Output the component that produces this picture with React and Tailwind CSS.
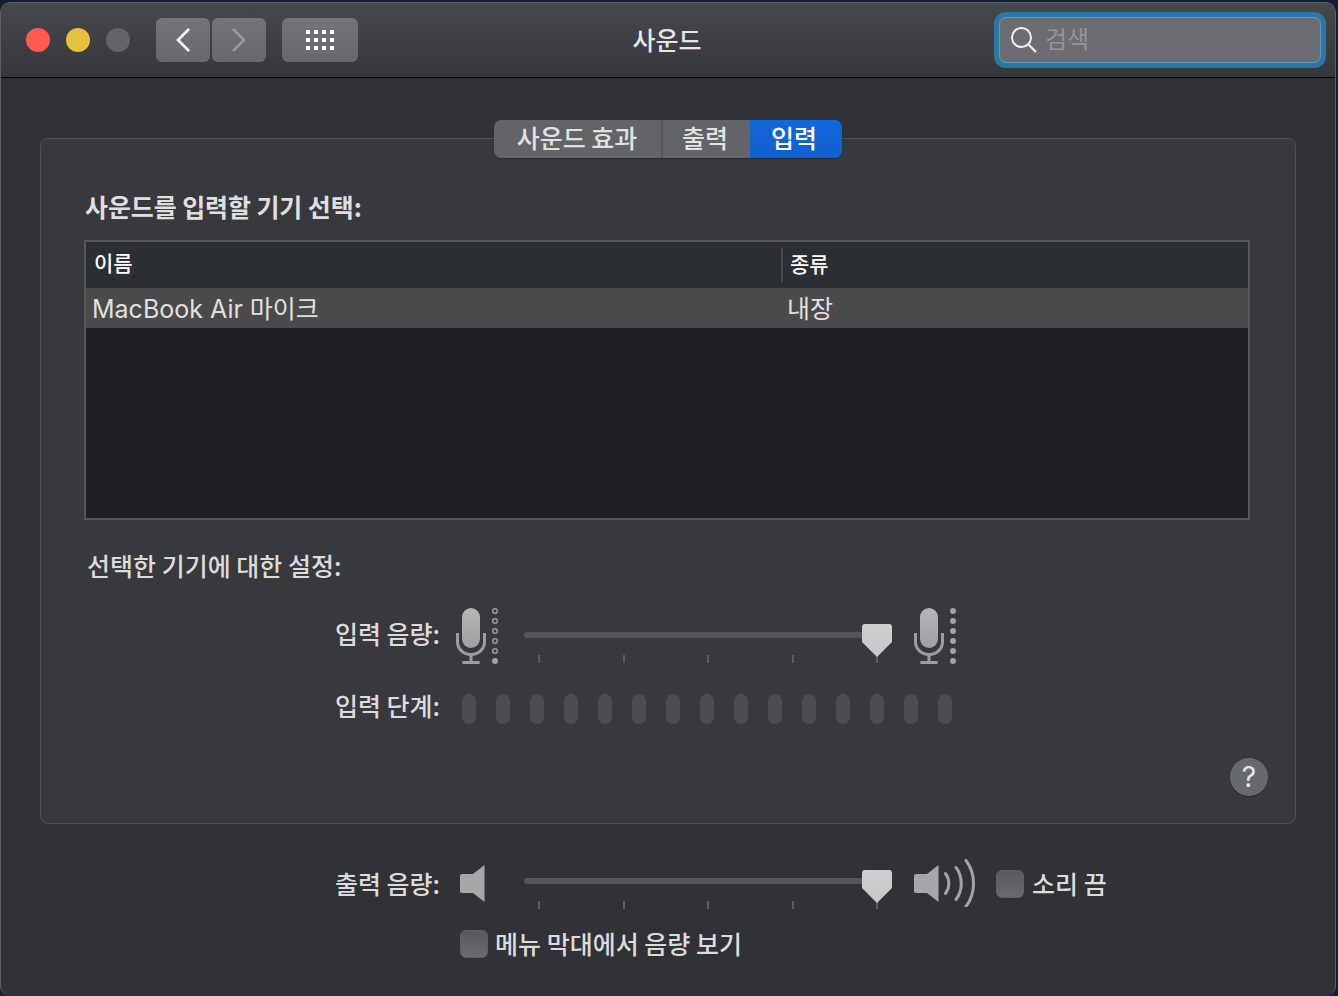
import React from 'react';

const FONT = 'font-["Inter","Noto_Sans_CJK_KR",sans-serif]';
const KR = 'font-["Noto_Sans_CJK_KR","Inter",sans-serif]';

const Mic = ({ filledAll }) => (
  <svg width="44" height="56" viewBox="0 0 44 56" className="shrink-0">
    <defs>
      <linearGradient id="micFill" x1="0" y1="0" x2="0" y2="1">
        <stop offset="0" stopColor="#b4b5b6" />
        <stop offset="1" stopColor="#a0a1a3" />
      </linearGradient>
    </defs>
    <rect x="6" y="0" width="18" height="40" rx="9" fill="url(#micFill)" />
    <path d="M1.500 25v9a13.500 12.500 0 0 0 27 0v-9" fill="none" stroke="#9c9d9f" strokeWidth="3" />
    <path d="M15 46v8" stroke="#9c9d9f" strokeWidth="3" />
    <rect x="6" y="53" width="18" height="3" rx="1.500" fill="#9c9d9f" />
    {[3, 13, 23, 33, 43, 53].map((cy, i) =>
      filledAll || i === 5 ? (
        <circle key={cy} cx="39" cy={cy} r="3" fill="#a2a3a5" />
      ) : (
        <circle key={cy} cx="39" cy={cy} r="2.300" fill="none" stroke="#96979a" strokeWidth="1.600" />
      )
    )}
  </svg>
);

const SpeakerLow = () => (
  <svg width="25" height="37" viewBox="0 0 25 37" className="shrink-0">
    <path d="M2 9h11L24.500 0v37L13 28H2a2 2 0 0 1-2-2V11a2 2 0 0 1 2-2z" fill="#a6a7a9" />
  </svg>
);

const SpeakerHigh = () => (
  <svg width="64" height="48" viewBox="0 0 64 48" className="shrink-0">
    <path d="M2 15h11L24.500 6v37L13 34H2a2 2 0 0 1-2-2V17a2 2 0 0 1 2-2z" fill="#a6a7a9" />
    <g fill="none" stroke="#a2a3a5" strokeWidth="3" strokeLinecap="round">
      <path d="M31.500 14.500c4.500 6 4.500 14 0 20" />
      <path d="M42 8.500c7 9 7 23 0 32" />
      <path d="M52 1.500c10 13 10 33 0 46" />
    </g>
  </svg>
);

const Slider = () => (
  <div className="relative w-[368px] h-[56px] shrink-0">
    <div className="absolute left-0 right-[20px] top-[24px] h-[6px] rounded-full bg-[#55565a]" />
    {[14, 99, 183, 268, 352].map((x) => (
      <div key={x} className="absolute top-[47px] w-[2px] h-[8px] bg-[#5c5d60]" style={{ left: x }} />
    ))}
    <svg width="30" height="33" viewBox="0 0 30 33" className="absolute right-0 top-[16px]">
      <defs>
        <linearGradient id="thumbFill" x1="0" y1="0" x2="0" y2="1">
          <stop offset="0" stopColor="#cfcfcf" />
          <stop offset="1" stopColor="#c6c7c7" />
        </linearGradient>
      </defs>
      <path d="M3 0h24a3 3 0 0 1 3 3v15L15 33 0 18V3a3 3 0 0 1 3-3z" fill="url(#thumbFill)" />
    </svg>
  </div>
);

const Checkbox = () => (
  <div className="w-[28px] h-[28px] shrink-0 rounded-[6px] bg-gradient-to-b from-[#58595c] to-[#6a6b6e] border border-[#5f6063]" />
);

const NavButton = ({ className = '', children }) => (
  <div className={`h-[44px] rounded-[6px] bg-gradient-to-b from-[#737477] to-[#67686b] flex items-center justify-center shrink-0 ${className}`}>
    {children}
  </div>
);

const RowLabel = ({ className = '', children }) => (
  <div className={`w-[399px] shrink-0 text-right text-[25px] leading-[32px] font-medium text-[#dcdcdd] ${className}`}>{children}</div>
);

export default function App() {
  return (
    <div className={`h-[996px] w-[1338px] overflow-hidden bg-[#0e2038] pt-[2px] ${KR}`}>
      <div className="h-[994px] w-[1336px] rounded-[10px] bg-[#313236] border-l border-r border-t border-[#5e5f62] flex flex-col overflow-hidden">
        <div className="h-[75px] shrink-0 border-b border-black bg-gradient-to-b from-[#47484c] to-[#36373b] flex items-center pl-[25px] pr-[9px]">
          <div className="w-[581px] shrink-0 flex items-center">
            <div className="w-[24px] h-[24px] rounded-full bg-[#ff5a52]" />
            <div className="w-[24px] h-[24px] rounded-full bg-[#e6c13c] ml-[16px]" />
            <div className="w-[24px] h-[24px] rounded-full bg-[#636467] ml-[16px]" />
            <NavButton className="w-[54px] ml-[26px]">
              <svg width="16" height="26" viewBox="0 0 16 26">
                <path d="M14 2 3 13l11 11" fill="none" stroke="#fff" strokeWidth="2.600" />
              </svg>
            </NavButton>
            <NavButton className="w-[54px] ml-[2px]">
              <svg width="16" height="26" viewBox="0 0 16 26">
                <path d="M2 2l11 11L2 24" fill="none" stroke="#98999b" strokeWidth="2.600" />
              </svg>
            </NavButton>
            <NavButton className="w-[76px] ml-[16px]">
              <svg width="30" height="22" viewBox="0 0 30 22" fill="#fff">
                {[0, 8, 16].map((y) =>
                  [0, 8, 16, 24].map((x) => <rect key={`${x}-${y}`} x={x + 1} y={y + 1} width="4" height="4" />)
                )}
              </svg>
            </NavButton>
          </div>
          <div className="w-[120px] pb-[2px] text-center text-[25px] leading-[30px] font-medium text-[#e6e6e7]">사운드</div>
          <div className="ml-auto w-[332px] h-[56px] rounded-[12px] bg-[#2b78a8] p-[5px]">
            <div className="h-full rounded-[7px] border border-[#5b9cc4] bg-[#6c6d70] flex items-center pl-[11px]">
              <svg width="26" height="26" viewBox="0 0 26 26" className="shrink-0">
                <circle cx="10.500" cy="10.500" r="9.500" fill="none" stroke="#f0f0f0" strokeWidth="2" />
                <path d="M17.500 17.500 25 25" stroke="#f0f0f0" strokeWidth="2.200" />
              </svg>
              <span className="ml-[8px] mb-[4px] text-[24px] leading-[30px] text-[#949597]">검색</span>
            </div>
          </div>
        </div>

        <div className="ml-[39px] mt-[60px] w-[1256px] h-[686px] shrink-0 rounded-[8px] border border-[#505154] bg-[#38393d] flex flex-col">
          <div className="flex justify-center -mt-[19px] ml-[-1px]">
            <div className="flex h-[38px] w-[348px] rounded-[7px] overflow-hidden text-[25px] leading-[34px] font-medium shadow-[0_1px_1px_rgba(0,0,0,0.25)]">
              <div className="w-[167px] text-center bg-[#636467] text-[#e2e2e3]">사운드 효과</div>
              <div className="w-[89px] pr-[2px] text-center bg-[#636467] text-[#e2e2e3] border-l-2 border-[#535458]">출력</div>
              <div className="w-[92px] pr-[3px] text-center bg-gradient-to-b from-[#1366dc] to-[#115fcf] text-white">입력</div>
            </div>
          </div>
          <div className="ml-[44px] mt-[32px] text-[25px] tracking-[-0.1px] leading-[32px] font-semibold text-[#dfdfe0]">사운드를 입력할 기기 선택:</div>
          <div className="ml-[43px] mt-[18px] w-[1166px] h-[280px] border-2 border-[#56575a] bg-[#1f2024] flex flex-col">
            <div className="h-[46px] bg-[#2b2e33] flex items-center shrink-0">
              <div className="w-[695px] pl-[8px] pb-[7px] text-[21px] leading-[28px] font-medium text-white">이름</div>
              <div className="h-[34px] border-l-2 border-[#47494d] pl-[7px] text-[21px] leading-[30px] font-medium text-white">종류</div>
            </div>
            <div className={`h-[40px] bg-[#4a4a4a] flex items-center shrink-0 text-[25px] leading-[36px] text-[#e0e0e0] ${FONT}`}>
              <div className="w-[701px] pl-[6px] pt-[1px]">MacBook Air 마이크</div>
              <div className="pt-[1px]">내장</div>
            </div>
          </div>
          <div className="ml-[46px] mt-[29px] text-[25px] leading-[32px] font-medium text-[#dcdcdd]">선택한 기기에 대한 설정:</div>
          <div className="mt-[27px] h-[56px] flex items-start">
            <div className="pt-[9px]"><RowLabel>입력 음량:</RowLabel></div>
            <div className="ml-[16px]"><Mic /></div>
            <div className="ml-[24px]"><Slider /></div>
            <div className="ml-[22px]"><Mic filledAll /></div>
          </div>
          <div className="mt-[30px] h-[30px] flex items-center">
            <RowLabel className="mb-[9px]">입력 단계:</RowLabel>
            <div className="ml-[22px] flex gap-[20px]">
              {Array.from({ length: 15 }).map((_, i) => (
                <div key={i} className="w-[14px] h-[30px] rounded-full bg-[#4c4d51]" />
              ))}
            </div>
          </div>
          <div className="mt-[34px] flex justify-end pr-[27px]">
            <div className={`w-[38px] h-[38px] rounded-full bg-[#68696c] flex items-center justify-center text-[28px] leading-none text-[#e6e6e6] shadow-[0_1px_1px_rgba(0,0,0,0.3)] ${FONT}`}>?</div>
          </div>
        </div>

        <div className="mt-[41px] h-[40px] flex items-start shrink-0">
          <div className="ml-[40px] pt-[2px]"><RowLabel>출력 음량:</RowLabel></div>
          <div className="ml-[20px]"><SpeakerLow /></div>
          <div className="ml-[39px] -mt-[11px]"><Slider /></div>
          <div className="ml-[22px] -mt-[6px]"><SpeakerHigh /></div>
          <div className="ml-[18px] mt-[5px]"><Checkbox /></div>
          <div className="ml-[8px] mt-[2px] text-[25px] leading-[32px] font-medium text-[#dcdcdd]">소리 끔</div>
        </div>
        <div className="mt-[25px] ml-[459px] flex items-start">
          <Checkbox />
          <div className="ml-[7px] -mt-[3px] text-[25px] leading-[32px] font-medium text-[#dcdcdd]">메뉴 막대에서 음량 보기</div>
        </div>
      </div>
    </div>
  );
}
